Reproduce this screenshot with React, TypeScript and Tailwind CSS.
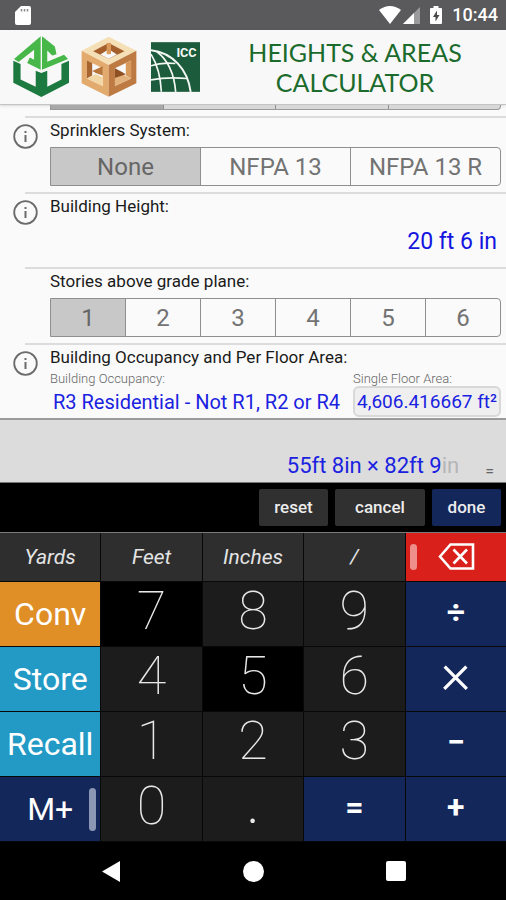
import { useState, type ReactNode } from "react";

const sprinklers = ["None", "NFPA 13", "NFPA 13 R"];
const stories = ["1", "2", "3", "4", "5", "6"];
const occupancies = ["R3 Residential - Not R1, R2 or R4"];

function CubeLogo() {
  return (
    <svg viewBox="12 6 176 192" className="h-16 w-[58px]" aria-hidden="true">
      <path
        d="M16 83 L38 93 V140 L84 162 V113 L101 120 L119 113 V162 L162 140 V93 L185 83 V150 L101 193 L16 150 Z"
        fill="#1c7a40"
      />
      <g fill="#47b749">
        <path d="M99 9 L18 78 L32 87 L79 50 V80 L66 73 L58 90 L99 110 Z" />
        <path d="M103 9 L142 40 L147 63 L134 67 L119 52 V86 L170 65 L182 78 L103 110 Z" />
      </g>
    </svg>
  );
}

function FrameLogo() {
  return (
    <svg viewBox="238 108 176 192" className="h-16 w-[58px]" aria-hidden="true">
      <path d="M325 112 L409 155 L325 198 L243 155 Z" fill="#f5dfb6" />
      <path d="M243 155 L325 198 V294 L243 253 Z" fill="#e3aa6e" />
      <path d="M409 155 L325 198 V294 L409 253 Z" fill="#bd7a43" />
      <path d="M325 131 L373 156 L325 179 L278 156 Z" fill="#a45f2d" />
      <path d="M325 150 L350 166 L325 179 L300 166 Z" fill="#f8f8f8" />
      <path d="M319 131 H332 V165 H319 Z" fill="#d9995b" />
      <path d="M259 184 L307 208 V262 L259 239 Z" fill="#f8f8f8" />
      <path d="M259 184 L275 192 V230 L259 239 Z" fill="#a8642f" />
      <path d="M259 239 L286 225 L307 236 V262 Z" fill="#f3d6a6" />
      <path d="M275 216 L307 202 V230 L286 222 Z" fill="#b87439" />
      <path d="M344 208 L393 184 V239 L344 262 Z" fill="#f8f8f8" />
      <path d="M377 192 L393 184 V239 L377 230 Z" fill="#d9995b" />
      <path d="M344 262 V237 L366 226 L393 239 Z" fill="#e3b27c" />
      <path d="M344 208 L360 216 L377 226 L344 237 Z" fill="#8f5023" />
    </svg>
  );
}

function IccLogo() {
  return (
    <svg viewBox="456 127 147 149" className="h-[50px] w-[49px]" role="img" aria-label="ICC">
      <rect x="456" y="127" width="147" height="149" fill="#1c5b3b" />
      <g fill="none" stroke="#f4f8f4" strokeWidth="5">
        <path d="M456 151 C520 158 566 208 575 276" strokeWidth="6" />
        <path d="M473 155 C510 183 526 225 530 276" />
        <path d="M456 163 C476 195 485 232 487 276" />
        <path d="M456 198 C478 190 500 188 529 191" />
        <path d="M456 240 C488 234 524 232 564 236" />
      </g>
      <text
        x="593"
        y="172"
        textAnchor="end"
        fill="#f4f8f4"
        fontSize="38"
        className="font-['Liberation_Sans_Narrow',Roboto,sans-serif] font-bold"
      >
        ICC
      </text>
    </svg>
  );
}

function InfoButton({ topic }: { topic: string }) {
  return (
    <button type="button" aria-label={`About ${topic}`} className="mt-1.5 size-[25px] shrink-0">
      <svg viewBox="0 0 25 25" className="size-full" fill="none" stroke="#6b6b6b">
        <circle cx="12.5" cy="12.5" r="11.3" strokeWidth="1.8" />
        <path d="M12.5 11 V18" strokeWidth="2" />
        <path d="M12.5 7 V9" strokeWidth="2" />
      </svg>
    </button>
  );
}

function Section({ title, info = true, children }: { title: string; info?: boolean; children: ReactNode }) {
  return (
    <section>
      <hr className="ml-[25px] border-t-2 border-[#dcdcdc]" />
      <div className="flex gap-3 pr-[5px] pl-[13px]">
        {info ? <InfoButton topic={title} /> : <span className="w-[25px] shrink-0" />}
        <div className="min-w-0 flex-1 pt-0.5">
          <h2 className="text-[17px] leading-5 text-[#1a1a1a]">{title}:</h2>
          {children}
        </div>
      </div>
    </section>
  );
}

function Segmented({ label, options }: { label: string; options: string[] }) {
  const [selected, setSelected] = useState(options[0]);
  return (
    <div
      role="group"
      aria-label={label}
      className="mt-[7px] mb-1.5 flex h-[39px] divide-x divide-[#8f8f8f] overflow-hidden rounded-r-sm border border-[#8f8f8f]"
    >
      {options.map((option) => (
        <button
          key={option}
          type="button"
          aria-pressed={option === selected}
          onClick={() => setSelected(option)}
          className="flex-1 basis-0 text-[24px] leading-none whitespace-nowrap text-[#737373] aria-pressed:bg-[#c8c8c8] aria-pressed:text-[#666666]"
        >
          {option}
        </button>
      ))}
    </div>
  );
}

type KeyDef = { label: string; style: string; pill?: boolean };

const unit = "bg-[#2e2e2e] text-[#e4e4e4] text-[21px] italic";
const digit = "bg-[#1c1c1c] text-[#e8e8e8] text-[54px] font-thin pb-1.5";
const digitDark = "bg-black text-[#e8e8e8] text-[54px] font-thin pb-1.5";
const blue = "bg-[#13275b] text-white text-[32px] font-bold pb-1";
const cyan = "bg-[#2399c5] text-white text-[32px]";

const keys: KeyDef[] = [
  { label: "Yards", style: unit },
  { label: "Feet", style: unit },
  { label: "Inches", style: unit },
  { label: "/", style: unit },
  { label: "backspace", style: "bg-[#d9201b]" },
  { label: "Conv", style: "bg-[#e08e26] text-white text-[32px]" },
  { label: "7", style: digitDark },
  { label: "8", style: digit },
  { label: "9", style: digit },
  { label: "÷", style: blue },
  { label: "Store", style: cyan },
  { label: "4", style: digit },
  { label: "5", style: digitDark },
  { label: "6", style: digit },
  { label: "×", style: "bg-[#13275b] text-white text-[58px] font-light pb-3" },
  { label: "Recall", style: cyan },
  { label: "1", style: digit },
  { label: "2", style: digit },
  { label: "3", style: digit },
  { label: "−", style: blue },
  { label: "M+", style: "bg-[#13275b] text-white text-[32px]", pill: true },
  { label: "0", style: digit },
  { label: ".", style: "bg-[#1c1c1c] text-[#e8e8e8] text-[54px] font-light pb-2" },
  { label: "=", style: blue },
  { label: "+", style: blue },
];

function Key({ label, style, pill }: KeyDef) {
  if (label === "backspace") {
    return (
      <button type="button" aria-label="Backspace" className={`relative flex items-center justify-center ${style}`}>
        <span className="absolute left-1 h-[26px] w-[7px] rounded-full bg-[#ee8f8c]" />
        <svg viewBox="0 0 37 27" className="mb-0.5 ml-0.5 h-[27px] w-[37px]" fill="none" stroke="white">
          <path d="M2 13.5 L12.5 1.5 H35 V25.5 H12.5 Z" strokeWidth="2.6" />
          <path d="M15.5 6.5 L29 20.5 M29 6.5 L15.5 20.5" strokeWidth="2.6" />
        </svg>
      </button>
    );
  }
  return (
    <button type="button" className={`relative flex items-center justify-center leading-none ${style}`}>
      {label}
      {pill && <span className="absolute right-1 h-[43px] w-[7px] rounded-full bg-[#8c97b3]" />}
    </button>
  );
}

export default function App() {
  return (
    <div className="w-full bg-[#fafafa] font-[Roboto,sans-serif]">
      <div className="flex h-[30px] items-center bg-[#5a595b] pr-2 pl-[15px] text-white">
        <svg viewBox="0 0 16 19" className="h-[19px] w-4" fill="white">
          <path d="M6 0 H14 Q16 0 16 2 V17 Q16 19 14 19 H2 Q0 19 0 17 V6 Z" />
          <path d="M6.5 3 V5.500 M9.500 3 V5.500 M12.500 3 V5.500" stroke="#8a898b" strokeWidth="1.5" />
        </svg>
        <svg viewBox="0 0 22 18" className="ml-auto h-[18px] w-[22px]" fill="white">
          <path d="M0 4 Q11 -4 22 4 L11 18 Z" />
        </svg>
        <svg viewBox="0 0 17 17" className="ml-0.5 size-[17px]">
          <path d="M17 0 V17 H0 Z" fill="#9b9a9c" />
          <path d="M11 6 V17 H0 Z" fill="white" />
        </svg>
        <svg viewBox="0 0 12 18" className="ml-2.5 h-[18px] w-3">
          <path d="M3.500 0 H8.500 V2 H11 Q12 2 12 3 V17 Q12 18 11 18 H1 Q0 18 0 17 V3 Q0 2 1 2 H3.500 Z" fill="white" />
          <path d="M7 4.500 L3 11 H5.500 V15.500 L9.500 9 H7 Z" fill="#4a494b" />
        </svg>
        <time className="ml-2.5 text-[18px] leading-none font-medium">10:44</time>
      </div>

      <header className="flex h-[75px] items-center border-b border-[#c4c4c4] bg-[#f8f8f8] pl-3 shadow-sm">
        <CubeLogo />
        <div className="ml-2.5">
          <FrameLogo />
        </div>
        <div className="ml-[13px]">
          <IccLogo />
        </div>
        <h1 className="flex-1 pl-1 text-center font-[Lato,sans-serif] text-[25px] leading-[30px] text-[#1b6b2c]">
          HEIGHTS &amp; AREAS
          <br />
          CALCULATOR
        </h1>
      </header>

      <main className="border-b-2 border-[#9a9a9a] pb-px">
        <div className="mr-[5px] mb-1.5 ml-[50px] flex h-[5px] divide-x divide-[#8f8f8f] overflow-hidden rounded-br-sm border border-t-0 border-[#9a9a9a] bg-[#d8d8d8]">
          <span className="flex-1 bg-[#a8a8a8]" />
          <span className="flex-1" />
          <span className="flex-1" />
          <span className="flex-1" />
        </div>

        <Section title="Sprinklers System">
          <Segmented label="Sprinklers System" options={sprinklers} />
        </Section>

        <Section title="Building Height">
          <input
            aria-label="Building Height"
            defaultValue="20 ft 6 in"
            className="mt-2.5 mb-[9px] block h-8 w-full bg-transparent pr-1 text-right text-[23px] text-[#1414e0] outline-none"
          />
        </Section>

        <Section title="Stories above grade plane" info={false}>
          <Segmented label="Stories above grade plane" options={stories} />
        </Section>

        <Section title="Building Occupancy and Per Floor Area">
          <div className="mt-1 flex gap-3">
            <div className="min-w-0 flex-1">
              <label htmlFor="occupancy" className="block text-[13px] leading-[15px] font-light text-[#666666]">
                Building Occupancy:
              </label>
              <select
                id="occupancy"
                className="block h-[31px] w-full appearance-none bg-transparent pl-[3px] text-[20px] text-[#1a22e0] outline-none"
              >
                {occupancies.map((name) => (
                  <option key={name}>{name}</option>
                ))}
              </select>
            </div>
            <div className="w-[148px] shrink-0">
              <label htmlFor="area" className="block text-[13px] leading-[15px] font-light text-[#666666]">
                Single Floor Area:
              </label>
              <input
                id="area"
                defaultValue="4,606.416667 ft²"
                className="block h-[31px] w-full rounded-md border-2 border-[#d8d8d8] bg-[#efefef] text-center text-[19px] text-[#1a22e0] outline-none"
              />
            </div>
          </div>
        </Section>
      </main>

      <output className="flex h-[63px] items-end justify-end gap-[26px] border-b border-[#777777] bg-[#dcdcdc] pr-3 pb-0.5">
        <span className="text-[22px] leading-7 text-[#1a22e0]">
          55ft 8in × 82ft 9<span className="text-[#b5b5b5]">in</span>
        </span>
        <span className="text-[16px] leading-4 text-[#666666]">=</span>
      </output>

      <div className="flex h-[50px] items-center justify-end gap-[7px] border-b border-[#7a7a7a] bg-black pr-[5px] text-[17px] leading-none font-medium text-[#ececec]">
        <button type="button" className="h-[37px] w-[69px] rounded-xs bg-[#303030]">reset</button>
        <button type="button" className="h-[37px] w-[90px] rounded-xs bg-[#303030]">cancel</button>
        <button type="button" className="h-[37px] w-[69px] rounded-xs bg-[#13275b]">done</button>
      </div>

      <div className="grid grid-cols-5 grid-rows-[48px_repeat(4,64px)] gap-px bg-[#080808] pb-px">
        {keys.map((key) => (
          <Key key={key.label} {...key} />
        ))}
      </div>

      <nav className="grid h-[58px] grid-cols-[1fr_85px_200px_85px_1fr] items-center bg-black">
        <span />
        <button type="button" aria-label="Back" className="flex justify-center">
          <svg viewBox="0 0 18 21" className="h-[21px] w-[18px]" fill="white">
            <path d="M18 0 V21 L0 10.500 Z" />
          </svg>
        </button>
        <button type="button" aria-label="Home" className="flex justify-center">
          <span className="size-[21px] rounded-full bg-white" />
        </button>
        <button type="button" aria-label="Recents" className="flex justify-center">
          <span className="size-5 rounded-xs bg-white" />
        </button>
        <span />
      </nav>
    </div>
  );
}
